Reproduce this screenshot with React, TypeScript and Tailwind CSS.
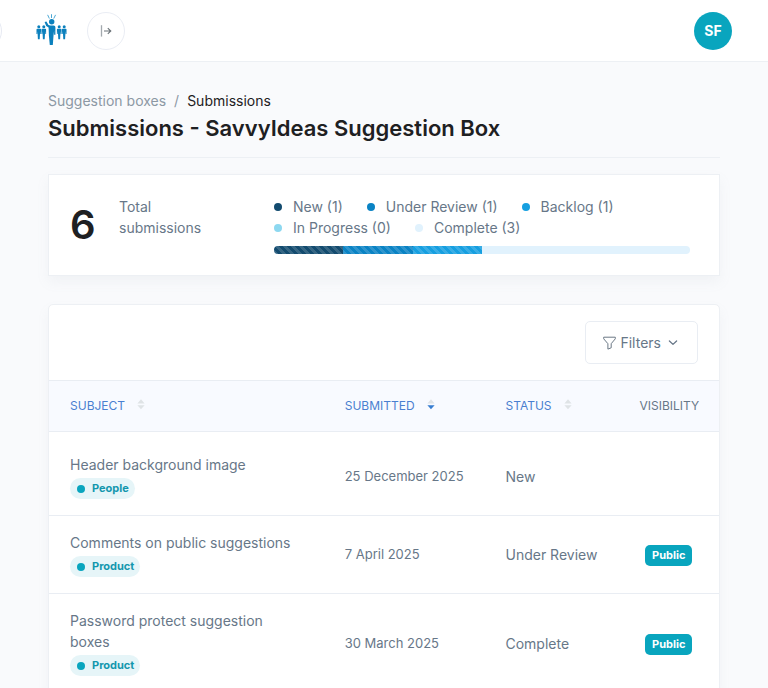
import React from 'react';

interface Status {
  label: string;
  count: number;
  dot: string;
  bar?: string;
}

interface Submission {
  subject: string;
  tag: string;
  submitted: string;
  status: string;
  isPublic: boolean;
}

const statuses: Status[] = [
  { label: 'New', count: 1, dot: 'bg-[#134b6f]', bar: 'bg-[#134b6f]' },
  { label: 'Under Review', count: 1, dot: 'bg-[#0a83c4]', bar: 'bg-[#0a83c4]' },
  { label: 'Backlog', count: 1, dot: 'bg-[#169fe0]', bar: 'bg-[#169fe0]' },
  { label: 'In Progress', count: 0, dot: 'bg-[#8dd8f0]' },
  { label: 'Complete', count: 3, dot: 'bg-[#e1f2fd]' },
];

const submissions: Submission[] = [
  { subject: 'Header background image', tag: 'People', submitted: '25 December 2025', status: 'New', isPublic: false },
  { subject: 'Comments on public suggestions', tag: 'Product', submitted: '7 April 2025', status: 'Under Review', isPublic: true },
  { subject: 'Password protect suggestion boxes', tag: 'Product', submitted: '30 March 2025', status: 'Complete', isPublic: true },
];

// x of the head of each bystander in the logo
const bystanders = [2.8, 7.8, 23.2, 28.2];

const Logo = () => (
  <svg width="31" height="32" viewBox="0 0 31 32" fill="#0b80bd" aria-hidden="true">
    <path
      d="M15.5 0.6v3M11.8 1.2l1.4 3M19.4 1.2l-1.5 3"
      stroke="#3a9fd0"
      strokeWidth="0.9"
      strokeLinecap="round"
      fill="none"
    />
    <circle cx="15.7" cy="7.8" r="2.7" />
    <path d="M8.6 8l1.8-.6 2.1 3.6 1.8.5h3.2c1.3 0 1.9.8 1.9 2v7.3h-1.3v-4.4l-.6 5.4-.7 9.2h-3l-.9-9.2-.3-8.2-2.4-1.6z" />
    {bystanders.map((x) => (
      <g key={x} transform={`translate(${x} 0)`}>
        <circle cx="0" cy="12.8" r="1.5" />
        <path d="M-1.6 14.8h3.2q.7 0 .7.8v4.4h-.8v-2.8l-.3 2.6-.3 5.4h-1.8l-.3-5.4-.3-2.6v2.8h-.8v-4.4q0-.8.7-.8z" />
      </g>
    ))}
  </svg>
);

const SortIcon: React.FC<{ active?: boolean }> = ({ active = false }) => (
  <svg width="8" height="11" viewBox="0 0 8 11" className="mb-1" aria-hidden="true">
    <path d="M4 0.3L7.6 4.6H0.4z" fill="#dfe3e6" />
    <path d="M0.4 6.2h7.2L4 10.3z" fill={active ? '#377dd0' : '#dfe3e6'} />
  </svg>
);

const SortButton: React.FC<{ label: string; active?: boolean }> = ({ label, active }) => (
  <button type="button" className="flex items-center gap-3 text-[#4a7fd0]">
    {label}
    <SortIcon active={active} />
  </button>
);

const Header = () => (
  <header className="flex h-[62px] items-center border-b border-[#edf0f4] bg-white pr-9">
    <button
      type="button"
      aria-label="Open menu"
      className="-ml-9 size-[38px] shrink-0 rounded-full border border-[#e7eaf3]"
    />
    <a href="#" aria-label="Home" className="mb-0.5 ml-[34px]">
      <Logo />
    </a>
    <button
      type="button"
      aria-label="Expand sidebar"
      className="ml-5 flex size-[38px] items-center justify-center rounded-full border border-[#eaedf4]"
    >
      <svg width="12" height="12" viewBox="0 0 12 12" fill="none" aria-hidden="true">
        <path d="M1.5 0.2v11.4" stroke="#a3a9ae" strokeWidth="1.3" />
        <path d="M4 6h6.6M7.8 3.1L10.8 6 7.8 8.9" stroke="#6b7378" strokeWidth="1.1" />
      </svg>
    </button>
    <button
      type="button"
      className="ml-auto size-[38px] rounded-full bg-[#09a5be] text-sm font-bold text-white"
    >
      SF
    </button>
  </header>
);

const Summary = () => (
  <section className="mt-4 flex items-center border border-[#edf0f4] bg-white px-[21px] py-[21px] shadow-[0_6px_12px_rgba(140,152,164,0.08)]">
    <div className="flex w-[204px] shrink-0 items-center self-stretch">
      <span className="w-[49px] text-[40px] leading-[48px] font-semibold text-[#1e2022]">6</span>
      <span className="w-24 self-start">Total submissions</span>
    </div>
    <div className="min-w-0 flex-1 pr-2">
      <ul className="flex flex-wrap gap-x-6">
        {statuses.map((status) => (
          <li key={status.label} className="flex items-center">
            <span className={`mr-[11px] size-2 rounded-full ${status.dot}`} />
            {status.label} ({status.count})
          </li>
        ))}
      </ul>
      <div className="mt-2 flex h-2 overflow-hidden rounded-full bg-[#e1f2fd]">
        {statuses
          .filter((status) => status.bar)
          .map((status) => (
            <div
              key={status.label}
              className={`w-1/6 bg-[linear-gradient(45deg,rgba(255,255,255,.15)_25%,transparent_25%,transparent_50%,rgba(255,255,255,.15)_50%,rgba(255,255,255,.15)_75%,transparent_75%,transparent)] bg-size-[8px_8px] ${status.bar}`}
            />
          ))}
      </div>
    </div>
  </section>
);

const SubmissionsTable = () => (
  <table className="w-full table-fixed text-left">
    <thead className="border-y border-[#e9edf3] bg-[#f8faff] text-xs text-[#677788]">
      <tr className="h-[51px]">
        <th className="w-[41%] px-[21px] font-normal">
          <SortButton label="SUBJECT" />
        </th>
        <th className="w-[24%] px-[21px] font-normal">
          <SortButton label="SUBMITTED" active />
        </th>
        <th className="w-[20%] px-[21px] font-normal">
          <SortButton label="STATUS" />
        </th>
        <th className="w-[15%] px-[21px] text-right font-normal">VISIBILITY</th>
      </tr>
    </thead>
    <tbody>
      {submissions.map((item) => (
        <tr key={item.subject} className="group border-b border-[#e9edf3]">
          <td className="px-[21px] py-4 group-first:pt-[22px]">
            <a href="#" className="block">{item.subject}</a>
            <span className="mt-[3px] flex h-[21px] w-fit items-center rounded-full bg-[#e6f5f8] pr-1.5 pl-[7px] text-[11px] font-bold text-[#1397ae]">
              <span className="mr-[7px] size-2 rounded-full bg-[#09a5be]" />
              {item.tag}
            </span>
          </td>
          <td className="px-[21px] py-4 text-[13px] whitespace-nowrap group-first:pt-[22px]">{item.submitted}</td>
          <td className="px-[21px] py-4 group-first:pt-[22px]">{item.status}</td>
          <td className="px-[21px] py-4 text-center group-first:pt-[22px]">
            {item.isPublic && (
              <span className="inline-flex h-[21px] items-center rounded-[5px] bg-[#09a5be] px-[7px] text-[11px] font-bold text-white">
                Public
              </span>
            )}
          </td>
        </tr>
      ))}
    </tbody>
  </table>
);

export default function App() {
  return (
    <div className="h-screen overflow-hidden bg-[#f9fafc] font-['Inter',sans-serif] text-sm leading-[21px] text-[#677788]">
      <Header />
      <main className="px-12 pt-7">
        <div className="border-b border-[#edf0f4] pb-[15px]">
          <nav aria-label="Breadcrumb" className="flex gap-2">
            <a href="#" className="text-[#8c98a4]">Suggestion boxes</a>
            <span className="text-[#8c98a4]">/</span>
            <span className="text-[#1e2022]">Submissions</span>
          </nav>
          <h1 className="mt-[3px] text-[22px] leading-7 font-semibold text-[#1e2022]">
            Submissions - SavvyIdeas Suggestion Box
          </h1>
        </div>
        <Summary />
        <section className="mt-7 rounded-[5px] border border-[#edf0f4] bg-white shadow-[0_6px_12px_rgba(140,152,164,0.08)]">
          <div className="flex justify-end px-[21px] py-4">
            <button type="button" className="flex h-[43px] items-center rounded-[5px] border border-[#e9edf3] pr-[19px] pl-[17px]">
              <svg width="13" height="14" viewBox="0 0 13 14" fill="none" stroke="#6b7885" className="mr-1" aria-hidden="true">
                <path d="M0.7 1.2h11.6v1.6L8.2 7.7v4.1l-3.3 1.3V7.7L0.7 2.8z" strokeLinejoin="round" />
              </svg>
              Filters
              <svg width="10" height="6" viewBox="0 0 10 6" fill="none" stroke="#677788" strokeWidth="1.3" className="ml-[7px]" aria-hidden="true">
                <path d="M1.4 1L5 4.4 8.6 1" strokeLinecap="round" strokeLinejoin="round" />
              </svg>
            </button>
          </div>
          <SubmissionsTable />
        </section>
      </main>
    </div>
  );
}
